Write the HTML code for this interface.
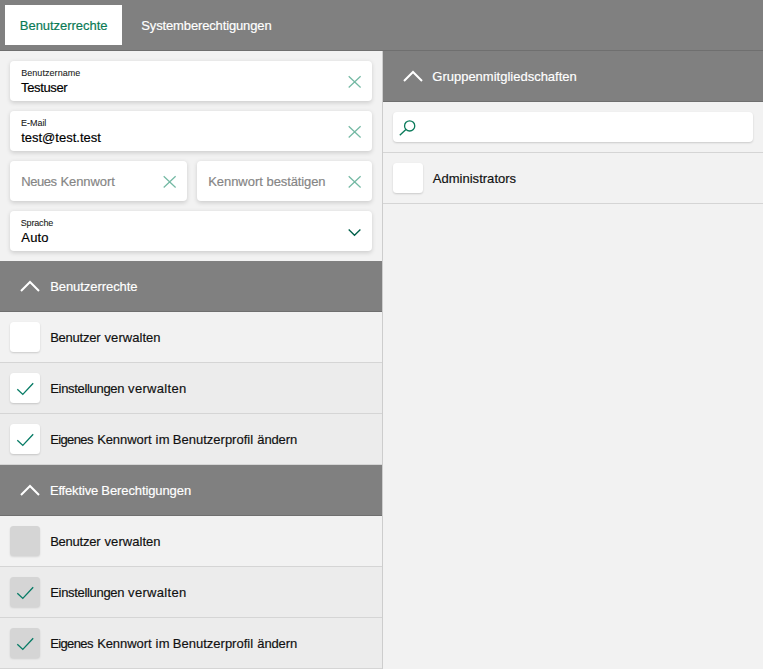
<!DOCTYPE html>
<html><head><meta charset="utf-8">
<style>
*{box-sizing:border-box;margin:0;padding:0}
html,body{width:763px;height:669px;overflow:hidden;background:#f2f2f2;font-family:"Liberation Sans",sans-serif;color:#111}
.abs{position:absolute}
#top{left:0;top:0;width:763px;height:51px;background:#808080;border-bottom:1px solid #6f6f6f}
#tab1{left:5px;top:5px;width:117px;height:40px;background:#fff}
#left{left:0;top:51px;width:383px;height:618px;background:#f2f2f2;border-right:1px solid #cdcdcd}
#right{left:383px;top:51px;width:380px;height:618px;background:#f2f2f2}
.inp{position:absolute;background:#fff;border-radius:4px;height:40px;box-shadow:0 1.5px 4px rgba(0,0,0,.15)}
svg{position:absolute;overflow:visible}
.t{position:absolute;white-space:nowrap;-webkit-text-stroke:.17px}
.hdr{position:absolute;left:0;height:51px;background:#808080;border-bottom:1px solid #6f6f6f;color:#fff;font-size:13px;line-height:51px;white-space:nowrap}
.hdr svg{left:20px;top:19px}
.hdr.r svg{left:19.6px}
.row{position:absolute;left:0;height:51px;border-bottom:1px solid #d5d5d5;font-size:13px;line-height:52px;white-space:nowrap}
.row.sel{background:#ececec}
.cb{position:absolute;left:10px;top:10px;width:30px;height:30px;border-radius:3.5px;background:#fff;box-shadow:0 1px 2px rgba(0,0,0,.17)}
.inp.tight{box-shadow:0 1px 2px rgba(0,0,0,.17)}
.cb.dis{background:#d5d5d5;box-shadow:0 1px 2px rgba(0,0,0,.12)}
.cb svg{left:7px;top:8px}
.x{stroke:#74b9a4;stroke-width:1.25;fill:none}
.ck{stroke:#087c66;stroke-width:1.35;fill:none}
</style></head><body>
<div id="top" class="abs"></div>
<div id="tab1" class="abs"></div>

<div id="left" class="abs"></div>
<div id="right" class="abs"></div>

<!-- inputs -->
<div class="inp" style="left:10px;top:61px;width:362px">
<svg style="left:338px;top:15px" width="14" height="14"><path class="x" d="M0.7 0.3L12.6 11.5M12.6 0.3L0.7 11.5"/></svg></div>
<div class="inp" style="left:10px;top:111px;width:362px">
<svg style="left:338px;top:15px" width="14" height="14"><path class="x" d="M0.7 0.3L12.6 11.5M12.6 0.3L0.7 11.5"/></svg></div>
<div class="inp" style="left:10px;top:161px;width:177px">
<svg style="left:153px;top:15px" width="14" height="14"><path class="x" d="M0.7 0.3L12.6 11.5M12.6 0.3L0.7 11.5"/></svg></div>
<div class="inp" style="left:197px;top:161px;width:175px">
<svg style="left:151px;top:15px" width="14" height="14"><path class="x" d="M0.7 0.3L12.6 11.5M12.6 0.3L0.7 11.5"/></svg></div>
<div class="inp" style="left:10px;top:211px;width:362px">
<svg style="left:338px;top:18px" width="14" height="8"><path d="M0.7 0.5L6.5 6.2L12.4 0.5" stroke="#00604a" stroke-width="1.35" fill="none"/></svg></div>

<!-- left sections -->
<div class="hdr" style="top:261px;width:382px"><svg width="20" height="12" viewBox="0 0 20 12"><path d="M1 11L10 2L19 11" stroke="#fff" stroke-width="2" fill="none"/></svg></div>
<div class="row" style="top:312px;width:382px"><div class="cb"></div></div>
<div class="row sel" style="top:363px;width:382px"><div class="cb"><svg width="17" height="14"><path class="ck" d="M0.3 8.2L5.8 13.4L16.2 2.2"/></svg></div></div>
<div class="row sel" style="top:414px;width:382px"><div class="cb"><svg width="17" height="14"><path class="ck" d="M0.3 8.2L5.8 13.4L16.2 2.2"/></svg></div></div>

<div class="hdr" style="top:465px;width:382px"><svg width="20" height="12" viewBox="0 0 20 12"><path d="M1 11L10 2L19 11" stroke="#fff" stroke-width="2" fill="none"/></svg></div>
<div class="row" style="top:516px;width:382px"><div class="cb dis"></div></div>
<div class="row sel" style="top:567px;width:382px"><div class="cb dis"><svg width="17" height="14"><path class="ck" d="M0.3 8.2L5.8 13.4L16.2 2.2"/></svg></div></div>
<div class="row sel" style="top:618px;width:382px"><div class="cb dis"><svg width="17" height="14"><path class="ck" d="M0.3 8.2L5.8 13.4L16.2 2.2"/></svg></div></div>

<!-- right -->
<div class="hdr r" style="left:383px;top:51px;width:380px"><svg width="20" height="12" viewBox="0 0 20 12"><path d="M1 11L10 2L19 11" stroke="#fff" stroke-width="2" fill="none"/></svg></div>
<div class="row" style="left:383px;top:102px;width:380px"><div class="inp tight" style="left:10px;top:10px;width:360px;height:30px">
<svg style="left:6px;top:8px" width="17" height="17"><circle cx="10.66" cy="5.9" r="5.1" stroke="#0a7a5a" stroke-width="1.3" fill="none"/><path d="M6.9 9.6L0.8 15.3" stroke="#0a7a5a" stroke-width="1.4"/></svg></div></div>
<div class="row" style="left:383px;top:153px;width:380px"><div class="cb"></div></div>
<div class="t" style="left:19.87px;top:19.30px;font-size:13px;line-height:13px;color:#0a7a55;letter-spacing:-0.042px">Benutzerrechte</div>
<div class="t" style="left:141.30px;top:19.00px;font-size:13px;line-height:13px;color:#fff;letter-spacing:-0.140px">Systemberechtigungen</div>
<div class="t" style="left:21.13px;top:69.38px;font-size:9px;line-height:9px;color:#1a1a1a;letter-spacing:0.060px;-webkit-text-stroke:.08px">Benutzername</div>
<div class="t" style="left:21.02px;top:80.90px;font-size:13px;line-height:13px;color:#000;letter-spacing:-0.358px">Testuser</div>
<div class="t" style="left:21.07px;top:119.38px;font-size:9px;line-height:9px;color:#1a1a1a;letter-spacing:-0.045px;-webkit-text-stroke:.08px">E-Mail</div>
<div class="t" style="left:21.15px;top:130.90px;font-size:13px;line-height:13px;color:#000;letter-spacing:0.005px">test@test.test</div>
<div class="t" style="left:21.23px;top:174.90px;font-size:13px;line-height:13px;color:#858585;letter-spacing:-0.480px">Neues</div>
<div class="t" style="left:60.44px;top:174.90px;font-size:13px;line-height:13px;color:#858585;letter-spacing:-0.066px">Kennwort</div>
<div class="t" style="left:208.14px;top:174.90px;font-size:13px;line-height:13px;color:#858585;letter-spacing:-0.030px">Kennwort</div>
<div class="t" style="left:266.59px;top:174.90px;font-size:13px;line-height:13px;color:#858585;letter-spacing:-0.118px">bestätigen</div>
<div class="t" style="left:20.74px;top:219.38px;font-size:9px;line-height:9px;color:#1a1a1a;letter-spacing:-0.160px;-webkit-text-stroke:.08px">Sprache</div>
<div class="t" style="left:21.35px;top:230.90px;font-size:13px;line-height:13px;color:#000;letter-spacing:0.171px">Auto</div>
<div class="t" style="left:50.13px;top:280.00px;font-size:13px;line-height:13px;color:#fff;letter-spacing:-0.056px">Benutzerrechte</div>
<div class="t" style="left:50.20px;top:331.00px;font-size:13px;line-height:13px;color:#111;letter-spacing:-0.249px">Benutzer</div>
<div class="t" style="left:104.56px;top:331.00px;font-size:13px;line-height:13px;color:#111;letter-spacing:0.051px">verwalten</div>
<div class="t" style="left:50.27px;top:382.00px;font-size:13px;line-height:13px;color:#111;letter-spacing:-0.320px">Einstellungen</div>
<div class="t" style="left:128.09px;top:382.00px;font-size:13px;line-height:13px;color:#111;letter-spacing:0.308px">verwalten</div>
<div class="t" style="left:50.14px;top:433.00px;font-size:13px;line-height:13px;color:#111;letter-spacing:-0.600px">Eigenes</div>
<div class="t" style="left:97.14px;top:433.00px;font-size:13px;line-height:13px;color:#111;letter-spacing:-0.079px">Kennwort</div>
<div class="t" style="left:155.44px;top:433.00px;font-size:13px;line-height:13px;color:#111;letter-spacing:0.450px">im</div>
<div class="t" style="left:172.86px;top:433.00px;font-size:13px;line-height:13px;color:#111;letter-spacing:-0.002px">Benutzerprofil</div>
<div class="t" style="left:257.31px;top:433.00px;font-size:13px;line-height:13px;color:#111;letter-spacing:-0.134px">ändern</div>
<div class="t" style="left:49.89px;top:484.00px;font-size:13px;line-height:13px;color:#fff;letter-spacing:-0.161px">Effektive</div>
<div class="t" style="left:101.32px;top:484.00px;font-size:13px;line-height:13px;color:#fff;letter-spacing:-0.098px">Berechtigungen</div>
<div class="t" style="left:50.20px;top:535.00px;font-size:13px;line-height:13px;color:#111;letter-spacing:-0.249px">Benutzer</div>
<div class="t" style="left:104.56px;top:535.00px;font-size:13px;line-height:13px;color:#111;letter-spacing:0.051px">verwalten</div>
<div class="t" style="left:50.27px;top:586.00px;font-size:13px;line-height:13px;color:#111;letter-spacing:-0.320px">Einstellungen</div>
<div class="t" style="left:128.09px;top:586.00px;font-size:13px;line-height:13px;color:#111;letter-spacing:0.308px">verwalten</div>
<div class="t" style="left:50.14px;top:637.00px;font-size:13px;line-height:13px;color:#111;letter-spacing:-0.600px">Eigenes</div>
<div class="t" style="left:97.14px;top:637.00px;font-size:13px;line-height:13px;color:#111;letter-spacing:-0.079px">Kennwort</div>
<div class="t" style="left:155.44px;top:637.00px;font-size:13px;line-height:13px;color:#111;letter-spacing:0.450px">im</div>
<div class="t" style="left:172.86px;top:637.00px;font-size:13px;line-height:13px;color:#111;letter-spacing:-0.002px">Benutzerprofil</div>
<div class="t" style="left:257.31px;top:637.00px;font-size:13px;line-height:13px;color:#111;letter-spacing:-0.134px">ändern</div>
<div class="t" style="left:432.28px;top:70.00px;font-size:13px;line-height:13px;color:#fff;letter-spacing:-0.001px">Gruppenmitgliedschaften</div>
<div class="t" style="left:432.73px;top:172.00px;font-size:13px;line-height:13px;color:#111;letter-spacing:0.025px">Administrators</div>
</body></html>
